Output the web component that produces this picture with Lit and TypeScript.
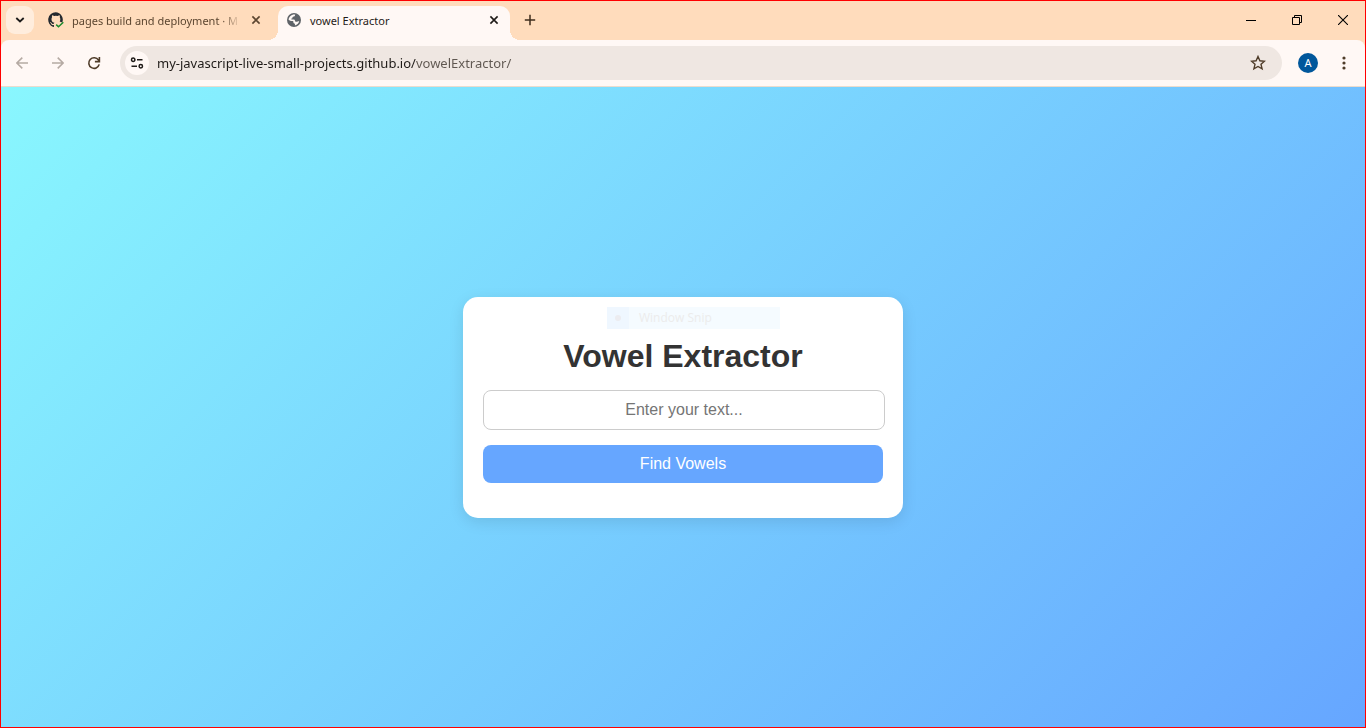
import { LitElement, html, css } from "lit";
import { customElement, state } from "lit/decorators.js";

const closeIcon = html`<svg width="10" height="10" viewBox="0 0 10 10" fill="none" stroke="currentColor" stroke-width="1.6"><path d="M1.400 1.400 8.600 8.600M8.600 1.400 1.400 8.600" /></svg>`;

const github = html`<svg width="16" height="16" viewBox="0 0 16 16">
  <path fill="#24292f" d="M7.700.3a7.500 7.500 0 0 0-2.400 14.600c.5.1.7-.2.7-.4v-1.400c-2 .4-2.600-.6-2.800-1.100-.1-.3-.6-1-.9-1.200-.3-.2-.7-.6 0-.6.600 0 1.100.6 1.200.8.7 1.200 1.900.9 2.400.7.1-.5.300-.9.500-1.100-1.600-.2-2.900-.9-2.900-3.400 0-.8.200-1.400.600-1.900-.1-.2-.4-1 .1-2.100 0 0 .7-.2 2.100.8a7 7 0 0 1 3.200 0c1.400-1 2.100-.8 2.100-.8.5 1.100.2 1.900.1 2.100.4.5.6 1.100.6 1.900 0 .9-.2 1.700-.6 2.200l2.600 1.100A7.500 7.500 0 0 0 7.700.3Z" />
  <path fill="none" stroke="#1a8a2c" stroke-width="1.500" d="m8.200 12.600 2.300 2.200 4.800-4.600" />
</svg>`;

const globe = html`<svg width="14" height="14" viewBox="0 0 14 14">
  <circle cx="7" cy="7" r="7" fill="#5f6368" />
  <path fill="#fff8f5" d="M8.200 1.600c-.2.900-.2 1.500-1 1.800-.8.200-1.600.1-1.700.9-.1.900 0 1.200-.8 1.300-.7 0-.6.900 0 1 .9.100 2.600-.3 3.100.6.4.9.300 1.500 1.200 1.500 1.100.1 2.200-.2 3.200-.8-.3 2-1.900 4-4.300 4.500.200-.8.200-1.400-.500-1.800-.7-.3-1.100-.8-1-1.500.1-.8-.4-1.100-1.300-1.100-1.200 0-2.600-.2-3.500-1.200C1.700 4.100 4.500 1.100 8.200 1.600Z" />
</svg>`;

@customElement("app-root")
export class AppRoot extends LitElement {
  static styles = css`
    :host {
      display: block;
      font-family: "Noto Sans", "Open Sans", sans-serif;
    }
    * { box-sizing: border-box; }
    button { border: 0; padding: 0; background: none; color: inherit; font: inherit; cursor: pointer; }
    svg { display: block; flex: none; }
    .window {
      display: flex;
      flex-direction: column;
      min-height: 100vh;
      border: 1px solid #ff0000;
      background: #ffdcbc;
    }
    .strip { display: flex; align-items: flex-end; height: 39px; color: #3f2d1c; }
    .search {
      display: grid;
      place-items: center;
      width: 28px;
      height: 28px;
      margin: 0 0 6px 5px;
      border-radius: 9px;
      background: #ffeddd;
      color: #1c1b1a;
    }
    .tab {
      position: relative;
      display: flex;
      align-items: center;
      width: 232px;
      height: 34px;
      padding: 0 11px 6px 9px;
      border-radius: 10px 10px 0 0;
      color: #5c4630;
    }
    .tab.first { margin-left: 5px; }
    .tab.active { margin-left: 7px; background: #fff8f5; color: #1f1b18; }
    .tab.first .close { margin-right: -1px; }
    .tab.active::before,
    .tab.active::after {
      content: "";
      position: absolute;
      bottom: 0;
      width: 10px;
      height: 10px;
    }
    .tab.active::before { right: 100%; background: radial-gradient(circle at 0 0, transparent 10px, #fff8f5 10px); }
    .tab.active::after { left: 100%; background: radial-gradient(circle at 100% 0, transparent 10px, #fff8f5 10px); }
    .label {
      display: flex;
      align-items: center;
      flex: 1;
      min-width: 0;
      height: 28px;
      gap: 8px;
      font-size: 11px;
      text-align: left;
    }
    .active .label { gap: 9px; }
    .title {
      flex: 1;
      white-space: nowrap;
      margin-right: 10px;
    }
    .first .title { mask-image: linear-gradient(90deg, #000 calc(100% - 20px), transparent); }
    .close, .new { display: grid; place-items: center; }
    .close { height: 18px; }
    .new { width: 28px; height: 28px; margin: 0 0 6px 6px; }
    .controls { display: flex; align-self: flex-start; margin: 0 -1px 0 auto; color: #000; }
    .controls button { display: grid; place-items: center; width: 46px; height: 38px; }
    .toolbar {
      display: flex;
      align-items: center;
      height: 47px;
      padding: 0 7px 1px;
      border-bottom: 1px solid #ecdccd;
      border-radius: 8px 8px 0 0;
      background: #fff8f5;
      color: #4f3c29;
    }
    .tool { display: grid; place-items: center; width: 28px; height: 28px; margin-right: 8px; }
    .tool:disabled { color: #b5aaa3; }
    .omnibox {
      display: flex;
      align-items: center;
      flex: 1;
      height: 34px;
      margin: 0 12px 0 4px;
      padding: 0 16px 0 5px;
      border-radius: 17px;
      background: #efe7e2;
    }
    .site { display: grid; place-items: center; width: 24px; height: 24px; border-radius: 50%; background: #fff8f5; color: #1f1b18; }
    .url {
      flex: 1;
      min-width: 0;
      height: 24px;
      margin-left: 8px;
      padding: 0;
      border: 0;
      outline: 0;
      font: 13px/24px "Noto Sans", "Open Sans", sans-serif;
      color: transparent;
      background: linear-gradient(90deg, #1f1b18 259px, #5f5750 259px);
      -webkit-background-clip: text;
      background-clip: text;
    }
    .avatar {
      width: 20px;
      height: 20px;
      margin: 0 12px 0 4px;
      border-radius: 50%;
      background: #01579b;
      color: #fff;
      font-size: 11px;
      line-height: 20px;
      text-align: center;
    }
    .menu { display: grid; place-items: center; width: 28px; height: 28px; }
    .page {
      display: flex;
      flex: 1;
      align-items: center;
      justify-content: center;
      padding: 20px;
      background: linear-gradient(135deg, #89f7fe, #66a6ff);
      font-family: "Liberation Sans", Arial, sans-serif;
    }
    .card {
      position: relative;
      width: 100%;
      max-width: 440px;
      padding: 20px;
      border-radius: 15px;
      background: #fff;
      box-shadow: 0 4px 15px rgba(0, 0, 0, 0.1);
      text-align: center;
    }
    h1 { margin: 21px 0 15px; color: #333; font-size: 32px; line-height: 37px; }
    .text {
      display: block;
      width: calc(100% + 2px);
      height: 40px;
      padding: 0 10px;
      border: 1px solid #ccc;
      border-radius: 8px;
      font: 16px "Liberation Sans", Arial, sans-serif;
      text-align: center;
    }
    .text::placeholder { color: #757575; }
    .find { width: 100%; height: 38px; margin-top: 15px; border-radius: 8px; background: #66a6ff; color: #fff; font-size: 16px; }
    .result { min-height: 15px; margin: 0; color: #333; }
    .snip {
      position: absolute;
      top: 10px;
      left: 144px;
      display: flex;
      align-items: center;
      width: 173px;
      height: 22px;
      background: #f5fbff;
      color: #ececec;
      font: 12px "Open Sans", "Noto Sans", sans-serif;
      pointer-events: none;
    }
    .dot { display: grid; place-items: center; width: 22px; height: 22px; margin-right: 10px; background: #eff7ff; }
  `;

  @state() private text = "";
  @state() private vowels = "";

  private find() {
    this.vowels = (this.text.match(/[aeiou]/gi) ?? []).join(", ");
  }

  render() {
    return html`
      <div class="window">
        <header>
          <div class="strip">
            <button class="search" aria-label="Search tabs">
              <svg width="10" height="6" viewBox="0 0 10 6" fill="none" stroke="currentColor" stroke-width="1.800"><path d="M1.300 1 5 4.500 8.700 1" /></svg>
            </button>
            <div class="tab first">
              <button class="label">${github}<span class="title">pages build and deployment · M</span></button>
              <button class="close" aria-label="Close tab">${closeIcon}</button>
            </div>
            <div class="tab active">
              <button class="label">${globe}<span class="title">vowel Extractor</span></button>
              <button class="close" aria-label="Close tab">${closeIcon}</button>
            </div>
            <button class="new" aria-label="New tab">
              <svg width="12" height="12" viewBox="0 0 12 12" fill="none" stroke="currentColor" stroke-width="1.500"><path d="M6 .8v10.400M.8 6h10.400" /></svg>
            </button>
            <div class="controls">
              <button aria-label="Minimize"><svg width="10" height="10" viewBox="0 0 10 10" stroke="currentColor"><path d="M0 5.500h10" /></svg></button>
              <button aria-label="Restore"><svg width="10" height="10" viewBox="0 0 10 10" fill="none" stroke="currentColor"><path d="M.5 2.500h7v7h-7zM2.500 2.500v-2h7v7h-2" /></svg></button>
              <button aria-label="Close window"><svg width="10" height="10" viewBox="0 0 10 10" stroke="currentColor" stroke-width="1.100"><path d="m0 0 10 10M10 0 0 10" /></svg></button>
            </div>
          </div>
          <div class="toolbar">
            <button class="tool" aria-label="Back" disabled>
              <svg width="12" height="12" viewBox="0 0 12 12" fill="none" stroke="currentColor" stroke-width="1.500"><path d="M12 6H1M6.300 .6.9 6l5.400 5.400" /></svg>
            </button>
            <button class="tool" aria-label="Forward" disabled>
              <svg width="12" height="12" viewBox="0 0 12 12" fill="none" stroke="currentColor" stroke-width="1.500"><path d="M0 6h11M5.700.6 11.100 6l-5.400 5.400" /></svg>
            </button>
            <button class="tool" aria-label="Reload">
              <svg width="14" height="14" viewBox="0 0 14 14" fill="none" stroke="currentColor" stroke-width="1.600"><path d="M12.200 8.400A5.300 5.300 0 1 1 11.500 4.100L12.400 5.200M12.400 1v4.600H7.900" /></svg>
            </button>
            <div class="omnibox">
              <button class="site" aria-label="View site information">
                <svg width="14" height="12" viewBox="0 0 14 12" fill="none" stroke="currentColor" stroke-width="1.500"><circle cx="3.200" cy="2.700" r="1.700" /><path d="M7 2.700h5.500M1.500 9.300H7" /><circle cx="10.800" cy="9.300" r="1.700" /></svg>
              </button>
              <input class="url" aria-label="Address" spellcheck="false" value="my-javascript-live-small-projects.github.io/vowelExtractor/" />
              <button aria-label="Bookmark this tab">
                <svg width="16" height="16" viewBox="0 0 16 16" fill="none" stroke="currentColor" stroke-width="1.400"><path d="m8 1.500 1.900 4.300 4.600.4-3.500 3.100 1.100 4.600L8 11.500l-4.100 2.400L5 9.300 1.500 6.200l4.600-.4Z" /></svg>
              </button>
            </div>
            <button class="avatar" aria-label="Profile A">A</button>
            <button class="menu" aria-label="Menu">
              <svg width="4" height="14" viewBox="0 0 4 14" fill="currentColor"><circle cx="2" cy="2" r="1.600" /><circle cx="2" cy="7" r="1.600" /><circle cx="2" cy="12" r="1.600" /></svg>
            </button>
          </div>
        </header>
        <main class="page">
          <section class="card">
            <h1>Vowel Extractor</h1>
            <input class="text" type="text" aria-label="Text" placeholder="Enter your text..."
              .value=${this.text}
              @input=${(e: Event) => (this.text = (e.target as HTMLInputElement).value)} />
            <button class="find" @click=${this.find}>Find Vowels</button>
            <p class="result">${this.vowels}</p>
            <div class="snip"><span class="dot"><svg width="6" height="6" viewBox="0 0 6 6"><circle cx="3" cy="3" r="3" fill="#ececf0" /></svg></span>Window Snip</div>
          </section>
        </main>
      </div>
    `;
  }
}
